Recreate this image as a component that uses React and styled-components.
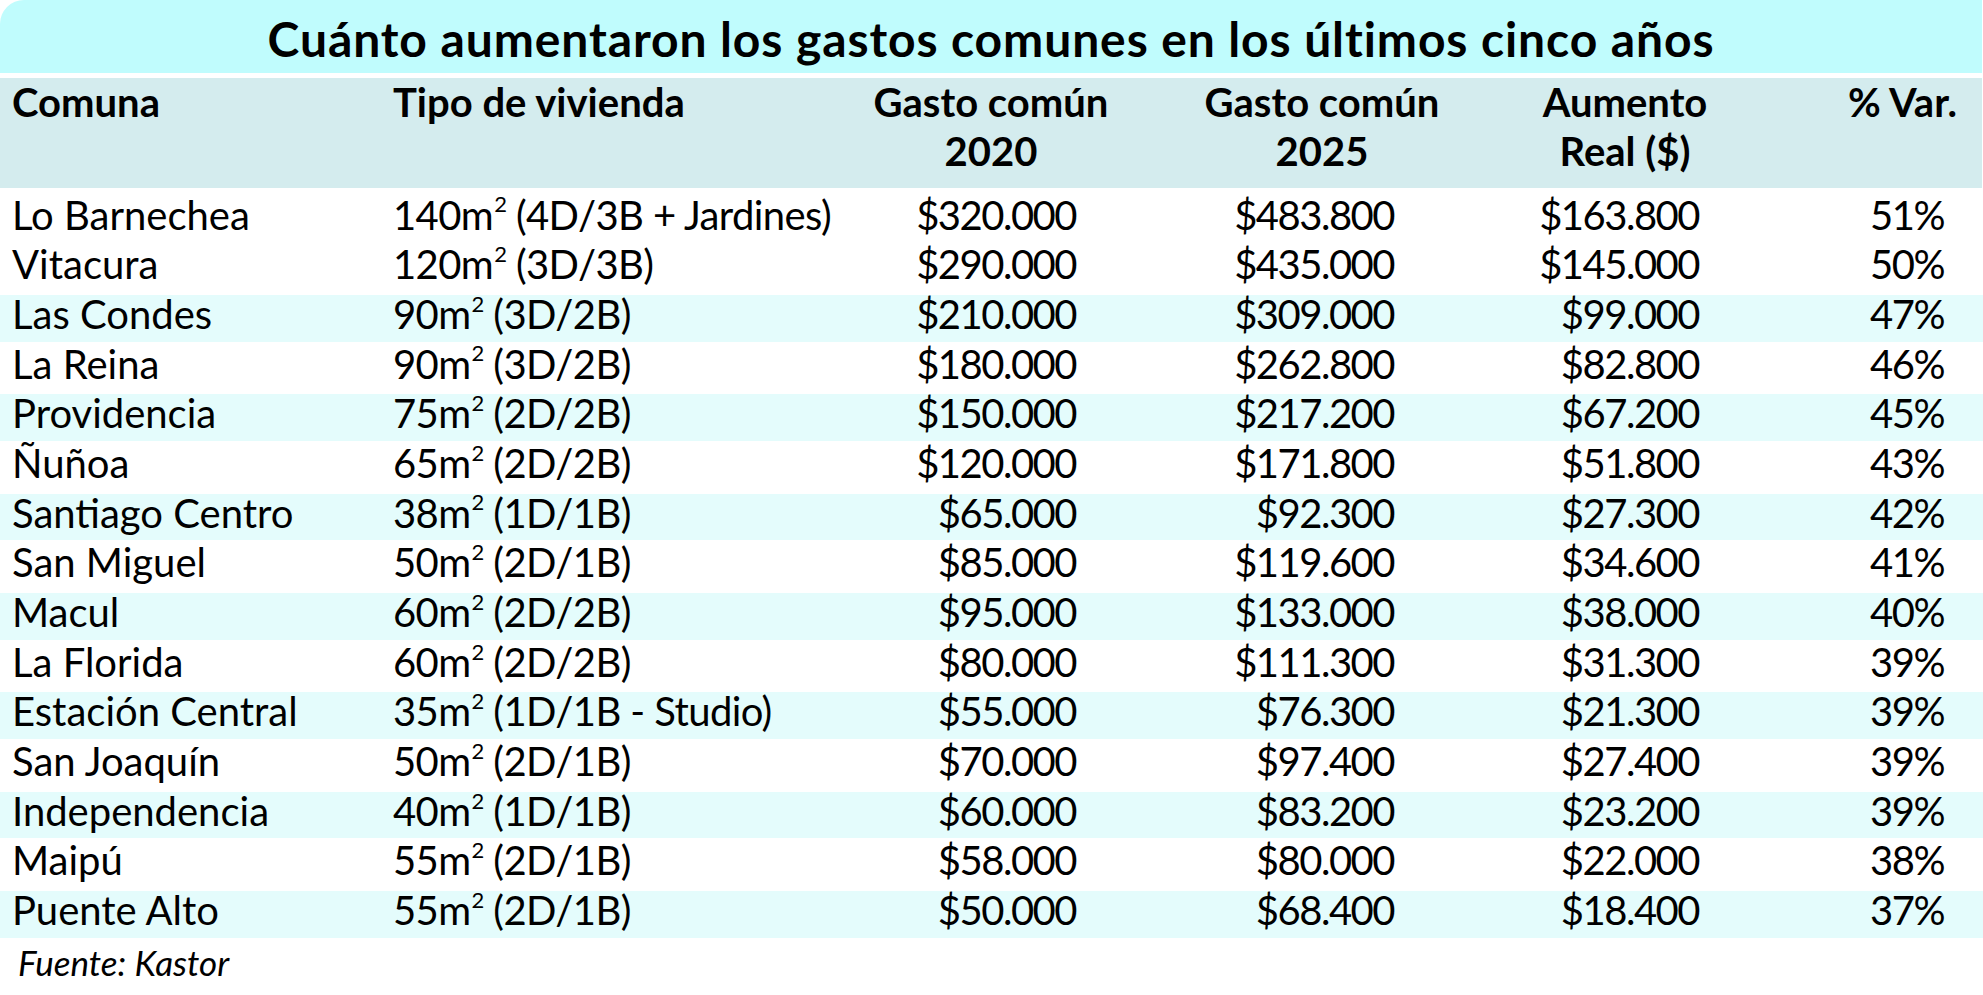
import React from 'react'
import styled, { createGlobalStyle } from 'styled-components'

const GlobalStyle = createGlobalStyle`
  html, body {
    margin: 0;
    padding: 0;
    background: #ffffff;
  }
  body {
    font-family: Lato, "Open Sans", "Liberation Sans", sans-serif;
    color: #000000;
  }
`

// head: alignment of the header text, padR: right padding of the values
const columns = [
  { key: 'comuna', head: 'left', padL: 12, padR: 0 },
  { key: 'tipo', head: 'left', padL: 0, padR: 0 },
  { key: 'g20', head: 'center', padL: 0, padR: 76 },
  { key: 'g25', head: 'center', padL: 0, padR: 98 },
  { key: 'aum', head: 'center', padL: 0, padR: 59 },
  { key: 'var', head: 'right', padL: 0, padR: 39, headPadR: 25 },
]

const headers = [
  ['Comuna'],
  ['Tipo de vivienda'],
  ['Gasto común', '2020'],
  ['Gasto común', '2025'],
  ['Aumento', 'Real ($)'],
  ['% Var.'],
]

const rows = [
  ['Lo Barnechea', '140', '(4D/3B + Jardines)', '$320.000', '$483.800', '$163.800', '51%'],
  ['Vitacura', '120', '(3D/3B)', '$290.000', '$435.000', '$145.000', '50%'],
  ['Las Condes', '90', '(3D/2B)', '$210.000', '$309.000', '$99.000', '47%'],
  ['La Reina', '90', '(3D/2B)', '$180.000', '$262.800', '$82.800', '46%'],
  ['Providencia', '75', '(2D/2B)', '$150.000', '$217.200', '$67.200', '45%'],
  ['Ñuñoa', '65', '(2D/2B)', '$120.000', '$171.800', '$51.800', '43%'],
  ['Santiago Centro', '38', '(1D/1B)', '$65.000', '$92.300', '$27.300', '42%'],
  ['San Miguel', '50', '(2D/1B)', '$85.000', '$119.600', '$34.600', '41%'],
  ['Macul', '60', '(2D/2B)', '$95.000', '$133.000', '$38.000', '40%'],
  ['La Florida', '60', '(2D/2B)', '$80.000', '$111.300', '$31.300', '39%'],
  ['Estación Central', '35', '(1D/1B - Studio)', '$55.000', '$76.300', '$21.300', '39%'],
  ['San Joaquín', '50', '(2D/1B)', '$70.000', '$97.400', '$27.400', '39%'],
  ['Independencia', '40', '(1D/1B)', '$60.000', '$83.200', '$23.200', '39%'],
  ['Maipú', '55', '(2D/1B)', '$58.000', '$80.000', '$22.000', '38%'],
  ['Puente Alto', '55', '(2D/1B)', '$50.000', '$68.400', '$18.400', '37%'],
]

function App() {
  return (
    <>
      <GlobalStyle />
      <Page>
        <TitleBar>Cuánto aumentaron los gastos comunes en los últimos cinco años</TitleBar>

        <HeadRow>
          {headers.map((lines, i) => (
            <HeadCell
              key={columns[i].key}
              align={columns[i].head}
              padL={columns[i].padL}
              padR={columns[i].headPadR}
            >
              {lines.map((l) => (
                <span key={l}>{l}</span>
              ))}
            </HeadCell>
          ))}
        </HeadRow>

        <Body>
          {rows.map((r, idx) => (
            <Row key={r[0]} striped={idx > 0 && idx % 2 === 0}>
              <Cell align="left" padL={12}>{r[0]}</Cell>
              <Cell align="left" tight>
                {r[1]}m<Sup>2</Sup> {r[2]}
              </Cell>
              {r.slice(3).map((v, j) => {
                const c = columns[j + 2]
                return (
                  <Cell key={c.key} align="right" padR={c.padR} num>
                    {v}
                  </Cell>
                )
              })}
            </Row>
          ))}
        </Body>

        <Source>Fuente: Kastor</Source>
      </Page>
    </>
  )
}

export default App

const grid = `
  display: grid;
  grid-template-columns: 393px 437px 322px 340px 266px 1fr;
`

const Page = styled.div`
  width: 1983px;
  height: 995px;
  overflow: hidden;
  background: #ffffff;
`

const TitleBar = styled.div`
  height: 73px;
  box-sizing: border-box;
  padding-top: 5px;
  margin-right: 1px;
  background: #c0fcfd;
  border-top-left-radius: 24px;
  text-align: center;
  font-weight: 700;
  font-size: 48px;
  line-height: 67px;
  letter-spacing: 0.9px;
  white-space: nowrap;
`

const HeadRow = styled.div`
  ${grid}
  height: 110px;
  margin-top: 5px;
  margin-right: 1px;
  background: #d4ecee;
`

const HeadCell = styled.div`
  display: flex;
  flex-direction: column;
  align-items: ${(p) => (p.align === 'center' ? 'center' : p.align === 'right' ? 'flex-end' : 'flex-start')};
  padding-left: ${(p) => p.padL || 0}px;
  padding-right: ${(p) => p.padR || 0}px;
  font-weight: 700;
  font-size: 40px;
  line-height: 49px;
  white-space: nowrap;
`

const Body = styled.div`
  margin-top: 5.5px;
`

const Row = styled.div`
  ${grid}
  height: 49.7px;
  background: ${(p) =>
    p.striped
      ? 'linear-gradient(to bottom, transparent 2px, #e4fcfc 2px, #e4fcfc calc(100% - 1px), transparent calc(100% - 1px))'
      : 'transparent'};
`

const Cell = styled.div`
  text-align: ${(p) => p.align};
  padding-left: ${(p) => p.padL || 0}px;
  padding-right: ${(p) => p.padR || 0}px;
  font-size: 40px;
  line-height: 42px;
  white-space: nowrap;
  letter-spacing: ${(p) => (p.num ? '-1.5px' : p.tight ? '-0.6px' : '0')};
`

const Sup = styled.span`
  font-size: 0.55em;
  vertical-align: 0.78em;
  line-height: 0;
  margin-left: 1px;
`

const Source = styled.div`
  padding: 3px 0 0 18px;
  font-style: italic;
  font-size: 35px;
  line-height: 40px;
`
